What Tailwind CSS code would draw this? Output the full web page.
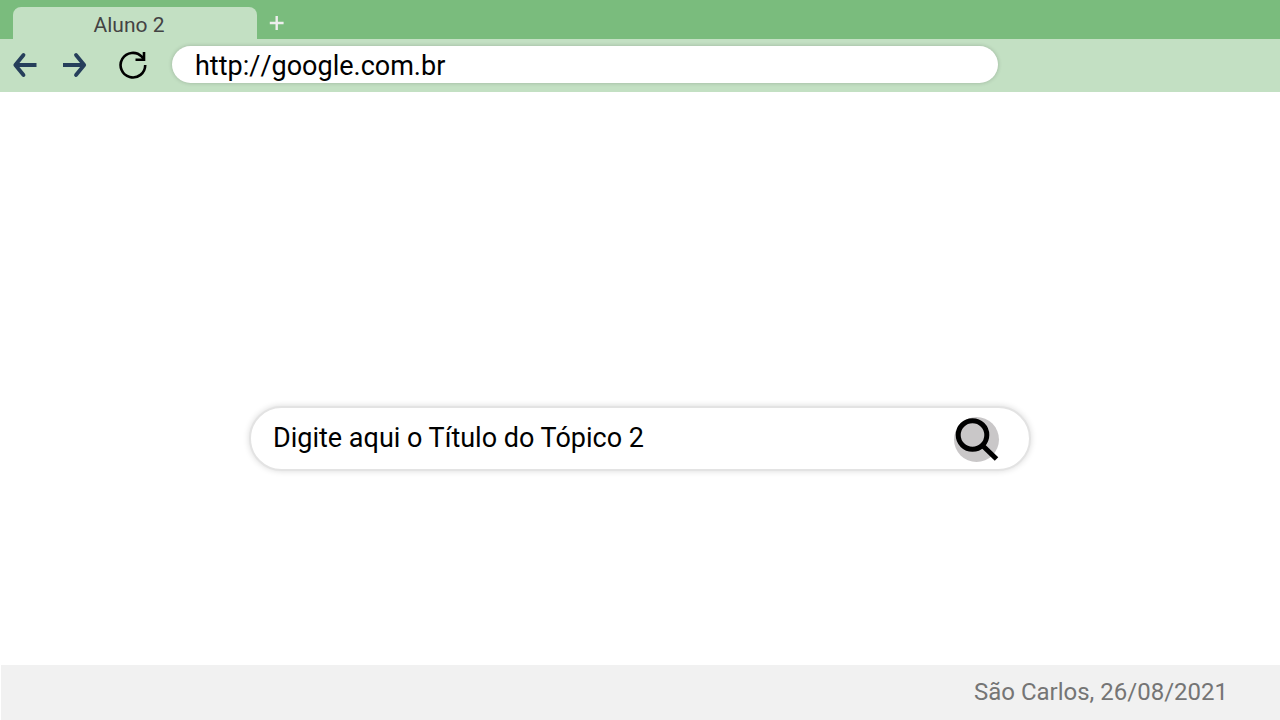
<!DOCTYPE html>
<html lang="pt-BR">
<head>
    <meta charset="UTF-8">
    <meta name="viewport" content="width=device-width, initial-scale=1.0">
    <title>Aluno 2</title>
    <script src="https://cdn.jsdelivr.net/npm/@tailwindcss/browser@4"></script>
</head>
<body class="min-h-screen flex flex-col bg-white font-[Roboto,sans-serif]">
    <!-- Tabs -->
    <div class="flex items-end h-[39px] bg-[#7abc7d] pl-[13px]">
        <a href="#" class="flex w-[244px] h-8 items-center justify-center rounded-t-lg bg-[#c3e0c3] pt-1 pr-3 text-[21px] leading-8 text-[#434343]">Aluno 2</a>
        <button type="button" aria-label="Nova guia" class="ml-3 mb-2 text-[#eeeeee]">
            <svg class="w-4 h-4" viewBox="0 0 16 16" fill="none" stroke="currentColor" stroke-width="2.400">
                <path d="M7.700 1v14M.8 8h13.800"/>
            </svg>
        </button>
    </div>

    <!-- Toolbar -->
    <div class="flex items-center h-[53px] bg-[#c3e0c3] pl-3 pb-0.5">
        <button type="button" aria-label="Voltar" class="text-[#263f5b]">
            <svg class="w-[26px] h-[26px]" viewBox="0 0 26 26" fill="none" stroke="currentColor">
                <path d="M3 13h21.500" stroke-width="4"/>
                <path d="M11.500 3L3.300 13l8.200 10" stroke-width="3.800" stroke-linecap="round" stroke-linejoin="round"/>
            </svg>
        </button>
        <button type="button" aria-label="Avançar" class="ml-6 text-[#263f5b]">
            <svg class="w-[26px] h-[26px]" viewBox="0 0 26 26" fill="none" stroke="currentColor">
                <path d="M1 13h21" stroke-width="4"/>
                <path d="M14 3l8.200 10L14 23" stroke-width="3.800" stroke-linecap="round" stroke-linejoin="round"/>
            </svg>
        </button>
        <button type="button" aria-label="Atualizar" class="ml-[31px] text-black">
            <svg class="w-7 h-7" viewBox="0 0 28 28" fill="none" stroke="currentColor" stroke-width="2.600">
                <path d="M26.200 14A12.300 12.300 0 1 1 22.800 5.700l2 2.600"/>
                <path d="M25 1v7.800h-8.500"/>
            </svg>
        </button>
        <input type="text" aria-label="Endereço" value="http://google.com.br" class="ml-[25px] mr-[282px] flex-1 min-w-0 h-[37px] rounded-full bg-white px-[23px] pt-[3px] text-[27px] leading-8 text-black [font-kerning:none] shadow-[0_0_4px_rgba(0,0,0,0.2)] outline-none">
    </div>

    <!-- Search -->
    <main class="flex flex-1 items-center justify-center pt-[119px]">
        <form class="flex w-full max-w-[782px] h-[65px] items-center rounded-full border-2 border-[#e3e3e3] bg-white pl-[22px] pr-[30px] shadow-[0_0_6px_rgba(0,0,0,0.15)]">
            <input type="text" aria-label="Pesquisar" value="Digite aqui o Título do Tópico 2" class="flex-1 min-w-0 text-[27px] leading-8 text-black outline-none">
            <button type="button" aria-label="Buscar" class="mt-[3px] rounded-full bg-[#c9c7c8] text-black">
                <svg class="w-[45px] h-[45px]" viewBox="0 0 45 45" fill="none" stroke="currentColor" stroke-width="5">
                    <circle cx="18.500" cy="18" r="14.300"/>
                    <path d="M28.500 28.500L42.500 42"/>
                </svg>
            </button>
        </form>
    </main>

    <!-- Footer -->
    <footer class="ml-px flex h-[55px] items-center justify-end bg-[#f1f1f1] pr-[52px] pb-0.5 text-2xl text-[#757575]">São Carlos, 26/08/2021</footer>
</body>
</html>
